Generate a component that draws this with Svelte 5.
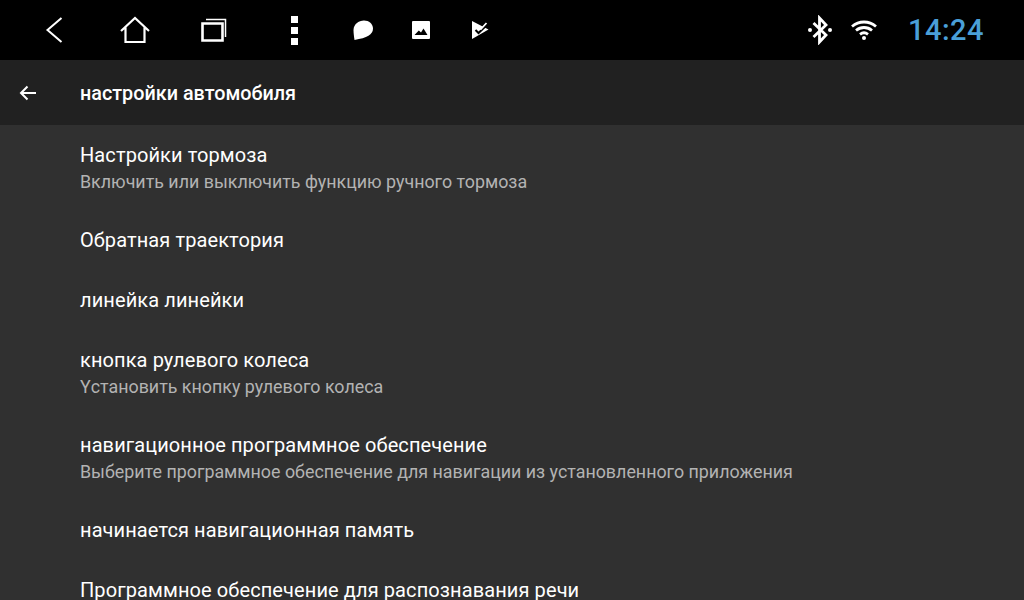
<script>
  const items = [
    { title: 'Настройки тормоза', sub: 'Включить или выключить функцию ручного тормоза' },
    { title: 'Обратная траектория' },
    { title: 'линейка линейки' },
    { title: 'кнопка рулевого колеса', sub: 'Yстановить кнопку рулевого колеса' },
    { title: 'навигационное программное обеспечение', sub: 'Выберите программное обеспечение для навигации из установленного приложения' },
    { title: 'начинается навигационная память' },
    { title: 'Программное обеспечение для распознавания речи' }
  ];
</script>

<div class="screen">
  <div class="statusbar">
    <div class="nav">
      <svg class="back" width="20" height="28" viewBox="0 0 20 28"><path d="M16.500 2 2.500 14l14 12" /></svg>
      <svg class="home" width="30" height="28" viewBox="0 0 30 28"><path d="M1 15 15 2l14 13M5.500 11.500V26h19V11.500" /></svg>
      <svg class="recent" width="26" height="24" viewBox="0 0 26 24"><path d="M1.500 5.500h20v17h-20z" /><path class="thin" d="M5 1.500h19.500V19" /></svg>
      <div class="dots"><span></span><span></span><span></span></div>
      <svg class="bubble" width="22" height="22" viewBox="0 0 22 22"><path d="M12 1.500c5 0 9 3.500 9 8.300 0 5.500-6 9.200-18.500 11.200C2 17.500 1.500 14 1.500 11 1.500 5.500 6.500 1.500 12 1.500z" /></svg>
      <svg class="image" width="20" height="20" viewBox="0 0 20 20"><path fill-rule="evenodd" d="M2 1h16a1 1 0 0 1 1 1v16a1 1 0 0 1-1 1H2a1 1 0 0 1-1-1V2a1 1 0 0 1 1-1zM3.500 15h13L12.500 8.500 10 12.500 7.800 10.500z" /></svg>
      <svg class="flag" width="20" height="22" viewBox="0 0 20 22"><path d="M1 2 17.500 10.500 1 20z" /><path class="tick" d="M4.500 11l3 3L18 4" /><path class="upper" d="M8 8l2 2 5.500-6" /></svg>
    </div>
    <div class="status">
      <svg class="bt" width="26" height="30" viewBox="0 0 26 30"><path d="M6.500 8 19 20l-6.500 7V3L19 10 6.500 22" /><circle cx="3" cy="15" r="2" /><circle cx="23" cy="15" r="2" /></svg>
      <svg class="wifi" width="28" height="22" viewBox="0 0 28 22"><path d="M2 7.500C9 1.500 19 1.500 26 7.500M6 11.500c4.800-4 11.200-4 16 0M10 15.300c2.500-2 5.500-2 8 0" /><circle cx="14" cy="19" r="2" /></svg>
      <span class="clock">14:24</span>
    </div>
  </div>

  <div class="toolbar">
    <svg class="arrow" width="18" height="16" viewBox="0 0 18 16"><path d="M17 8H2M8.500 1.500 2 8l6.500 6.500" /></svg>
    <span class="heading">настройки автомобиля</span>
  </div>

  <div class="list">
    {#each items as item}
      <div class="row" class:double={item.sub}>
        <div class="title">{item.title}</div>
        {#if item.sub}<div class="sub">{item.sub}</div>{/if}
      </div>
    {/each}
  </div>
</div>

<style>
  :global(body) {
    margin: 0;
    background: #303030;
  }

  .screen {
    width: 1024px;
    height: 600px;
    overflow: hidden;
    background: #303030;
    font-family: Roboto, "Liberation Sans", sans-serif;
    display: flex;
    flex-direction: column;
  }

  .statusbar {
    height: 60px;
    flex: none;
    background: #000;
    display: flex;
    justify-content: space-between;
    align-items: center;
  }

  svg {
    display: block;
    flex: none;
    fill: none;
    stroke: #fff;
  }

  .nav {
    display: flex;
    align-items: center;
    padding-left: 45px;
  }

  .back { stroke-width: 2; }
  .home { margin-left: 55px; stroke-width: 2.2; }
  .recent { margin-left: 51px; stroke-width: 2.6; }
  .recent .thin { stroke-width: 1.5; }

  .dots {
    margin-left: 64px;
    width: 7px;
    display: flex;
    flex-direction: column;
    gap: 4px;
  }

  .dots span {
    height: 7px;
    background: #fff;
  }

  .bubble { margin-left: 54px; fill: #fff; stroke: none; }
  .image { margin-left: 37px; fill: #fff; stroke: none; }
  .flag { margin-left: 40px; fill: #fff; stroke: none; }
  .flag .tick { fill: none; stroke: #000; stroke-width: 2; }
  .flag .upper { fill: none; stroke: #fff; stroke-width: 1.8; }

  .status {
    display: flex;
    align-items: center;
    padding-right: 40px;
  }

  .bt { stroke-width: 2.8; }
  .bt circle, .wifi circle { fill: #fff; stroke: none; }
  .wifi { margin-left: 17px; stroke-width: 2.8; }

  .clock {
    margin-left: 30px;
    color: #4a9fd8;
    font-size: 29px;
    font-weight: 500;
    letter-spacing: 0.5px;
  }

  .toolbar {
    height: 65px;
    flex: none;
    background: #212121;
    display: flex;
    align-items: center;
    padding-left: 19px;
    box-sizing: border-box;
  }

  .arrow { stroke-width: 2; }

  .heading {
    margin-left: 43px;
    margin-top: 2px;
    color: #fff;
    font-size: 19.8px;
    font-weight: 500;
  }

  .row {
    height: 60px;
    box-sizing: border-box;
    padding-left: 80px;
    display: flex;
    flex-direction: column;
    justify-content: center;
  }

  .row.double {
    height: 85px;
    padding-top: 2px;
  }

  .title {
    color: #fff;
    font-size: 20px;
    letter-spacing: 0.1px;
    line-height: 27px;
    white-space: nowrap;
  }

  .sub {
    color: #b3b3b3;
    font-size: 17.85px;
    line-height: 27px;
    margin-top: -1px;
    white-space: nowrap;
  }
</style>
